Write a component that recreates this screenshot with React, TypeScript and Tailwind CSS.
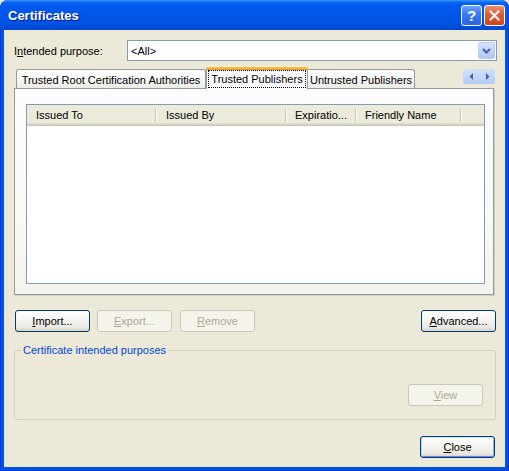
import React from "react";

function XPButton({
  children,
  disabled,
  isDefault,
  className = "",
}: {
  children: React.ReactNode;
  disabled?: boolean;
  isDefault?: boolean;
  className?: string;
}) {
  if (disabled) {
    return (
      <div
        className={`w-[75px] h-[22px] rounded-[3px] border border-[#C9C7BA] bg-[#F5F4EA] text-[#ACA899] flex items-center justify-center pt-[1px] ${className}`}
      >
        {children}
      </div>
    );
  }
  return (
    <div
      className={`w-[75px] h-[22px] rounded-[3px] border border-[#003C74] bg-[linear-gradient(to_bottom,#FFFFFF_0%,#F5F4F0_45%,#ECEAE3_80%,#D6D0C5_100%)] text-black flex items-center justify-center pt-[1px] ${
        isDefault ? "shadow-[inset_0_1px_0_#CEE7FF,inset_1px_0_0_#BCD4F6,inset_-1px_0_0_#89ADE4,inset_0_-1px_0_#6982EE]" : ""
      } ${className}`}
    >
      {children}
    </div>
  );
}

function ColSep() {
  return (
    <div className="flex h-full items-center pb-[2px]">
      <div className="w-[1px] h-[14px] bg-[#C7C5B2]" />
      <div className="w-[1px] h-[14px] bg-white" />
    </div>
  );
}

export default function App() {
  return (
    <div className="w-[509px] h-[471px] font-['Liberation_Sans',Arial,sans-serif] text-[11px] leading-[13px] bg-[#ECE9D8]">
      <div className="w-[509px] h-[471px] flex flex-col rounded-t-[8px] bg-[#0054E3] border-x border-b border-[#0831D9]">
        {/* Title bar */}
        <div className="h-[30px] -mx-[1px] flex items-center justify-between pl-[8px] pr-[4px] rounded-t-[8px] bg-[linear-gradient(to_bottom,#3D95FF_0%,#0A66F4_8%,#0058EE_20%,#0055E5_55%,#0053E2_80%,#0046D0_100%)]">
          <span className="text-white font-bold text-[13px] leading-[16px] mt-[1px] [text-shadow:1px_1px_0_#0A1883]">
            Certificates
          </span>
          <div className="flex gap-[2px] mt-[1px]">
            <div className="w-[21px] h-[21px] rounded-[3px] border border-white bg-[linear-gradient(to_bottom,#6FA0F8_0%,#3C7CF2_40%,#2963E3_100%)] flex items-center justify-center text-white font-bold text-[15px] leading-[15px]">
              ?
            </div>
            <div className="w-[21px] h-[21px] rounded-[3px] border border-white bg-[linear-gradient(to_bottom,#EB8F72_0%,#E0603C_40%,#CC4418_100%)] flex items-center justify-center">
              <svg width="11" height="11" viewBox="0 0 11 11">
                <path d="M1.5 1.5 L9.5 9.5 M9.5 1.5 L1.5 9.5" stroke="white" strokeWidth="2" strokeLinecap="square" />
              </svg>
            </div>
          </div>
        </div>

        {/* Body */}
        <div className="flex-1 mx-[3px] mb-[3px] bg-[#ECE9D8] flex flex-col pl-[10px] pr-[8px] pt-[10px] text-black">
          {/* Intended purpose row */}
          <div className="flex h-[21px] items-center">
            <span className="w-[113px] pt-[2px]">
              I<span className="underline">n</span>tended purpose:
            </span>
            <div className="w-[370px] h-[21px] border border-[#7F9DB9] bg-white flex items-center pl-[3px] pr-[1px]">
              <span className="flex-1 pt-[1px]">&lt;All&gt;</span>
              <div className="w-[17px] h-[17px] rounded-[2px] border border-[#B9CCF5] bg-[linear-gradient(to_bottom,#D7E3FD_0%,#C1D3FB_50%,#B2C8F7_100%)] flex items-center justify-center">
                <svg width="9" height="6" viewBox="0 0 9 6">
                  <path d="M1 1 L4.5 4.5 L8 1" stroke="#4D6185" strokeWidth="2" fill="none" />
                </svg>
              </div>
            </div>
          </div>

          {/* Tab strip */}
          <div className="mt-[6px] h-[21px] flex items-end">
            <div className="ml-[2px] w-[190px] h-[19px] border border-b-0 border-[#919B9C] rounded-t-[3px] bg-[linear-gradient(to_bottom,#FFFFFF_0%,#F7F7F4_50%,#ECEBE6_100%)] flex items-center justify-center pt-[2px]">
              Trusted Root Certification Authorities
            </div>
            <div className="relative z-10 w-[102px] h-[22px] -mb-[1px] border-x border-[#919B9C] rounded-t-[3px] bg-[#FCFCFE] flex flex-col">
              <div className="h-[3px] -mx-[1px] rounded-t-[3px] bg-[linear-gradient(to_bottom,#FFC83C_0%,#F5B23A_50%,#E68B2C_100%)]" />
              <div className="flex-1 mx-[1px] mb-[1px] border border-dotted border-black flex items-center justify-center">
                Trusted Publishers
              </div>
            </div>
            <div className="w-[107px] h-[19px] border border-b-0 border-l-0 border-[#919B9C] rounded-tr-[3px] bg-[linear-gradient(to_bottom,#FFFFFF_0%,#F7F7F4_50%,#ECEBE6_100%)] flex items-center justify-center pt-[2px]">
              Untrusted Publishers
            </div>
            <div className="ml-auto mr-[2px] self-start mt-[2px] w-[32px] h-[15px] flex bg-[linear-gradient(to_bottom,#D3E0FD_0%,#C1D3FB_60%,#B5CAF8_100%)] rounded-[2px]">
              <div className="flex-1 flex items-center justify-center">
                <svg width="5" height="7" viewBox="0 0 5 7">
                  <path d="M4 0 L0.5 3.5 L4 7 Z" fill="#4D6185" />
                </svg>
              </div>
              <div className="flex-1 flex items-center justify-center">
                <svg width="5" height="7" viewBox="0 0 5 7">
                  <path d="M1 0 L4.5 3.5 L1 7 Z" fill="#4D6185" />
                </svg>
              </div>
            </div>
          </div>

          {/* Tab panel */}
          <div className="w-[480px] h-[207px] border border-[#919B9C] bg-[linear-gradient(to_bottom,#FCFCFE_0%,#F9F9F6_60%,#F4F3EE_100%)] shadow-[1px_1px_0_#D0CEBF] pl-[11px] pt-[15px]">
            <div className="w-[459px] h-[180px] border border-[#7F9DB9] bg-white flex flex-col">
              <div className="h-[21px] flex bg-[#EBEADB] shadow-[inset_0_-1px_0_#CBC7B8,inset_0_-2px_0_#D6D2C2,inset_0_-3px_0_#E2DECD]">
                <div className="w-[130px] flex">
                  <span className="flex-1 pl-[9px] flex items-center">Issued To</span>
                  <ColSep />
                </div>
                <div className="w-[130px] flex">
                  <span className="flex-1 pl-[9px] flex items-center">Issued By</span>
                  <ColSep />
                </div>
                <div className="w-[70px] flex">
                  <span className="flex-1 pl-[8px] flex items-center whitespace-nowrap">Expiratio...</span>
                  <ColSep />
                </div>
                <div className="w-[105px] flex">
                  <span className="flex-1 pl-[8px] flex items-center">Friendly Name</span>
                  <ColSep />
                </div>
                <div className="flex-1" />
              </div>
              <div className="flex-1" />
            </div>
          </div>

          {/* Buttons row */}
          <div className="mt-[15px] flex items-center">
            <XPButton className="ml-[1px]">
              <span>
                <span className="underline">I</span>mport...
              </span>
            </XPButton>
            <XPButton disabled className="ml-[7px]">
              <span>
                <span className="underline">E</span>xport...
              </span>
            </XPButton>
            <XPButton disabled className="ml-[8px]">
              <span>
                <span className="underline">R</span>emove
              </span>
            </XPButton>
            <XPButton className="ml-auto mr-[1px]">
              <span>
                <span className="underline">A</span>dvanced...
              </span>
            </XPButton>
          </div>

          {/* Group box */}
          <div className="relative mt-[18px] w-[482px] h-[70px] rounded-[3px] border border-[#D0D0BF]">
            <span className="absolute left-[6px] -top-[7px] px-[2px] bg-[#ECE9D8] text-[#0046D5]">
              Certificate intended purposes
            </span>
            <div className="flex justify-end pr-[12px] pt-[33px]">
              <XPButton disabled className="h-[21px]">
                <span>
                  <span className="underline">V</span>iew
                </span>
              </XPButton>
            </div>
          </div>

          {/* Close */}
          <div className="mt-[16px] flex justify-end mr-[2px]">
            <XPButton isDefault className="h-[21px]">
              <span>
                <span className="underline">C</span>lose
              </span>
            </XPButton>
          </div>
        </div>
      </div>
    </div>
  );
}
